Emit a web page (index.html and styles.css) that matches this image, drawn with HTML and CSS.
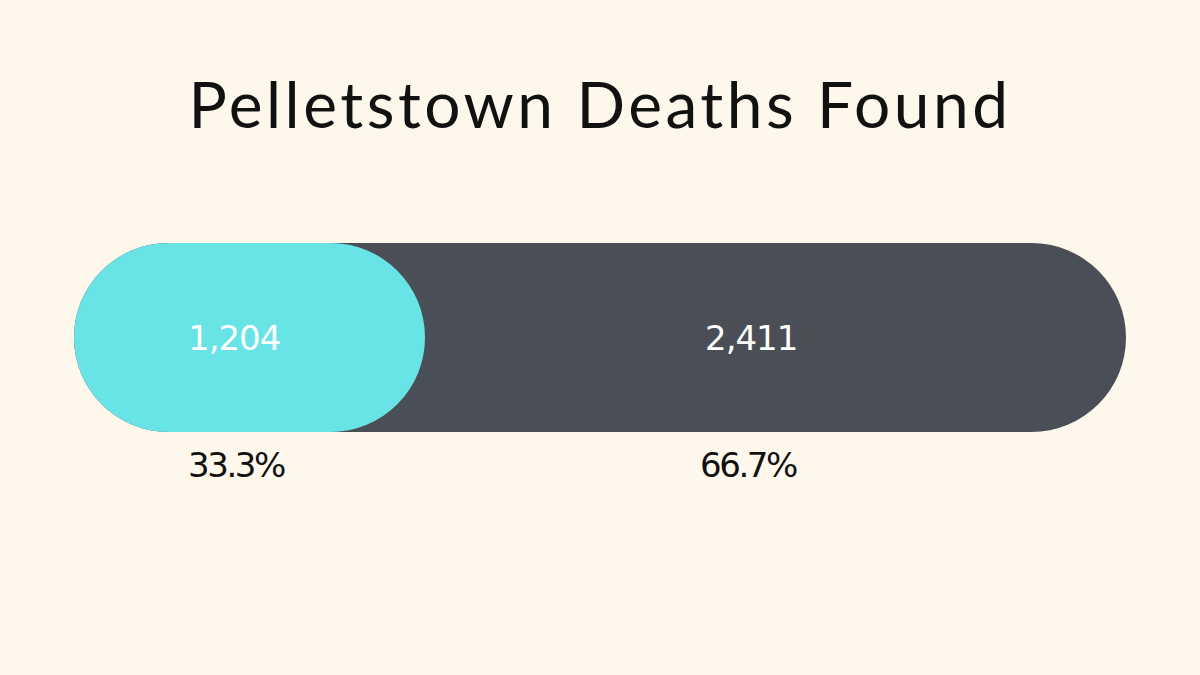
FILE: index.html
```html
<!DOCTYPE html>
<html>
<head>
<meta charset="utf-8">
<link rel="stylesheet" href="styles.css">
</head>
<body>
<main class="page">
  <h1 class="title">Pelletstown Deaths Found</h1>
  <div class="bar">
    <div class="seg seg-a"><span>1,204</span></div>
    <div class="seg seg-b"><span>2,411</span></div>
  </div>
  <div class="pcts">
    <div class="pct pct-a">33.3%</div>
    <div class="pct pct-b">66.7%</div>
  </div>
</main>
</body>
</html>
```
FILE: styles.css
```css
html, body {
  margin: 0;
  padding: 0;
  background: #fdf7ec;
}
.page {
  width: 1200px;
  height: 675px;
  box-sizing: border-box;
  padding: 65px 74px 0;
  display: flex;
  flex-direction: column;
}
.title {
  margin: 0;
  font-family: Lato, "Noto Sans", sans-serif;
  font-weight: 400;
  font-size: 64px;
  line-height: 77px;
  letter-spacing: 3.5px;
  text-align: center;
  color: #111111;
}
.bar {
  margin-top: 101px;
  height: 189px;
  border-radius: 95px;
  background: #4a4f57;
  display: flex;
}
.seg {
  display: flex;
  align-items: center;
  font-family: "DejaVu Sans", sans-serif;
  font-size: 34px;
  letter-spacing: -1px;
  color: #ffffff;
}
.seg-a {
  width: 351px;
  flex: none;
  background: #68e4e6;
  border-radius: 95px;
  padding-left: 114px;
  box-sizing: border-box;
}
.seg-b {
  padding-left: 280px;
}
.pcts {
  display: flex;
  margin-top: 13px;
  font-family: "DejaVu Sans", sans-serif;
  font-size: 34px;
  line-height: 40px;
  letter-spacing: -2.4px;
  color: #111111;
}
.pct-a {
  width: 351px;
  padding-left: 114px;
  box-sizing: border-box;
}
.pct-b {
  padding-left: 275px;
}
```
